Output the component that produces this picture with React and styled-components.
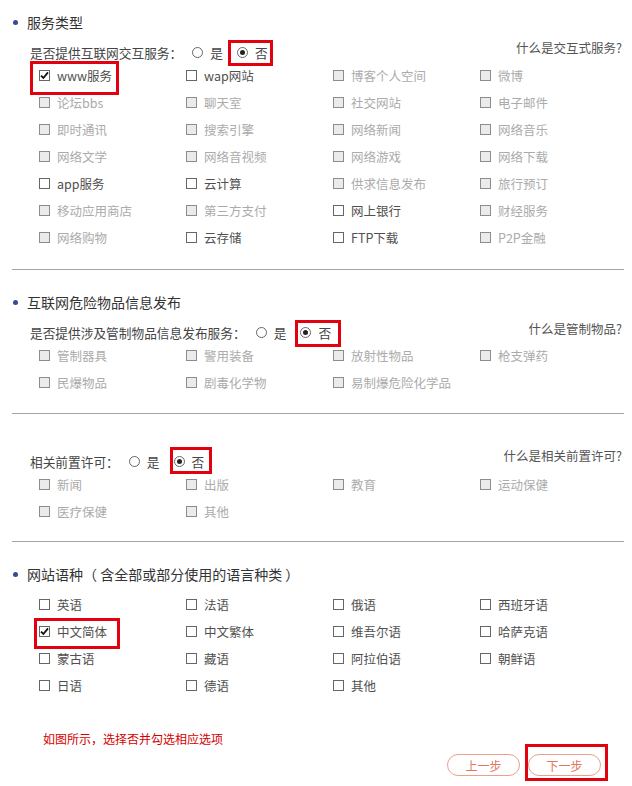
import React from "react";
import styled, { createGlobalStyle } from "styled-components";

const GlobalStyle = createGlobalStyle`
  body {
    margin: 0;
    background: #fff;
    font-family: "Noto Sans CJK SC", "Noto Sans", sans-serif;
  }
`;

const Page = styled.div`
  width: 632px;
  padding-bottom: 10px;
`;

const Section = styled.div`
  padding: ${(props) => props.$top}px 10px 0 13px;
`;

const Title = styled.div`
  display: flex;
  align-items: center;
  gap: 9px;
  height: 20px;
  font-size: 14px;
  color: #333;
  &::before {
    content: "";
    width: 5px;
    height: 5px;
    border-radius: 50%;
    background: #3b4896;
  }
`;

const Question = styled.div`
  display: flex;
  align-items: center;
  height: 20px;
  margin-top: ${(props) => props.$top || 0}px;
  padding-left: 17px;
  font-size: 12.7px;
  color: #444;
`;

const QuestionLabel = styled.span`
  margin-right: 10px;
`;

const Help = styled.span`
  margin-left: auto;
  margin-bottom: ${(props) => props.$lift * 2}px;
  font-size: 12.5px;
  color: #555;
  white-space: nowrap;
`;

const RadioOption = styled.label`
  display: flex;
  align-items: center;
  gap: 7px;
  margin-right: 14px;
`;

const RadioCircle = styled.span`
  box-sizing: border-box;
  display: flex;
  align-items: center;
  justify-content: center;
  width: 11px;
  height: 11px;
  border: 1px solid #666;
  border-radius: 50%;
  &::after {
    content: "";
    display: ${(props) => (props.$checked ? "block" : "none")};
    width: 5px;
    height: 5px;
    border-radius: 50%;
    background: #222;
  }
`;

const Highlight = styled.span`
  position: relative;
  display: inline-flex;
  justify-self: start;
  &::after {
    content: "";
    position: absolute;
    top: ${(props) => props.$t}px;
    right: ${(props) => props.$r}px;
    bottom: ${(props) => props.$b}px;
    left: ${(props) => props.$l}px;
    border: 3px solid #e3000f;
    pointer-events: none;
  }
`;

const Grid = styled.div`
  display: grid;
  grid-template-columns: repeat(4, 147px);
  grid-auto-rows: 27px;
  margin-top: ${(props) => props.$top || 0}px;
  padding-left: 26px;
`;

const Item = styled.label`
  display: flex;
  align-items: center;
  gap: 7px;
  font-size: 12.5px;
  color: ${(props) => (props.$disabled ? "#ababab" : "#505050")};
  white-space: nowrap;
`;

const Box = styled.span`
  box-sizing: border-box;
  display: flex;
  align-items: center;
  justify-content: center;
  width: 11px;
  height: 11px;
  border: 1px solid ${(props) => (props.$disabled ? "#8c8c8c" : "#666")};
  background: ${(props) => (props.$disabled ? "#ebebeb" : "#fff")};
  svg {
    display: block;
  }
`;

const Divider = styled.div`
  height: 1px;
  margin: ${(props) => props.$top}px 8px 0 12px;
  background: #a6a6a6;
`;

const Note = styled.div`
  margin: 31px 0 0 43px;
  font-size: 12px;
  line-height: 18px;
  color: #d40000;
`;

const Actions = styled.div`
  display: flex;
  justify-content: flex-end;
  gap: 8px;
  margin-top: 6px;
  padding-right: 31px;
`;

const StepButton = styled.button`
  box-sizing: border-box;
  width: 73px;
  height: 22px;
  padding: 0;
  border: 1px solid #e9a18d;
  border-radius: 11px;
  background: #fff;
  font-family: inherit;
  font-size: 12px;
  color: #e2775a;
`;

function Check({ label, checked, disabled }) {
  return (
    <Item $disabled={disabled}>
      <Box $disabled={disabled}>
        {checked && (
          <svg width="9" height="9" viewBox="0 0 9 9">
            <path d="M1 4.6 L3.4 7 L8 1.4" fill="none" stroke="#111" strokeWidth="1.8" />
          </svg>
        )}
      </Box>
      {label}
    </Item>
  );
}

function Radio({ label, checked }) {
  return (
    <RadioOption>
      <RadioCircle $checked={checked} />
      {label}
    </RadioOption>
  );
}

function Options({ items, top }) {
  return (
    <Grid $top={top}>
      {items.map((item, i) =>
        item.box ? (
          <Highlight key={i} {...item.box}>
            <Check label={item.label} checked={item.checked} disabled={item.disabled} />
          </Highlight>
        ) : (
          <Check key={i} label={item.label} checked={item.checked} disabled={item.disabled} />
        )
      )}
    </Grid>
  );
}

const on = (label, extra) => ({ label, ...extra });
const off = (label) => ({ label, disabled: true });

const services = [
  on("www服务", { checked: true, box: { $t: -1, $r: -7, $b: -6, $l: -9 } }),
  on("wap网站"), off("博客个人空间"), off("微博"),
  off("论坛bbs"), off("聊天室"), off("社交网站"), off("电子邮件"),
  off("即时通讯"), off("搜索引擎"), off("网络新闻"), off("网络音乐"),
  off("网络文学"), off("网络音视频"), off("网络游戏"), off("网络下载"),
  on("app服务"), on("云计算"), off("供求信息发布"), off("旅行预订"),
  off("移动应用商店"), off("第三方支付"), on("网上银行"), off("财经服务"),
  off("网络购物"), on("云存储"), on("FTP下载"), off("P2P金融"),
];

const goods = [
  off("管制器具"), off("警用装备"), off("放射性物品"), off("枪支弹药"),
  off("民爆物品"), off("剧毒化学物"), off("易制爆危险化学品"),
];

const permits = [
  off("新闻"), off("出版"), off("教育"), off("运动保健"),
  off("医疗保健"), off("其他"),
];

const languages = [
  on("英语"), on("法语"), on("俄语"), on("西班牙语"),
  on("中文简体", { checked: true, box: { $t: 0, $r: -13, $b: -4, $l: -5 } }),
  on("中文繁体"), on("维吾尔语"), on("哈萨克语"),
  on("蒙古语"), on("藏语"), on("阿拉伯语"), on("朝鲜语"),
  on("日语"), on("德语"), on("其他"),
];

export default function App() {
  return (
    <Page>
      <GlobalStyle />
      <Section $top={12}>
        <Title>服务类型</Title>
        <Question $top={10}>
          <QuestionLabel>是否提供互联网交互服务：</QuestionLabel>
          <Radio label="是" />
          <Highlight $t={-3} $r={9} $b={-4} $l={-9}>
            <Radio label="否" checked />
          </Highlight>
          <Help $lift={5}>什么是交互式服务?</Help>
        </Question>
        <Options items={services} />
      </Section>
      <Divider $top={18} />

      <Section $top={22}>
        <Title>互联网危险物品信息发布</Title>
        <Question $top={10}>
          <QuestionLabel>是否提供涉及管制物品信息发布服务：</QuestionLabel>
          <Radio label="是" />
          <Highlight $t={-3} $r={4} $b={-5} $l={-5}>
            <Radio label="否" checked />
          </Highlight>
          <Help $lift={4}>什么是管制物品?</Help>
        </Question>
        <Options items={goods} />
      </Section>
      <Divider $top={17} />

      <Section $top={37}>
        <Question>
          <QuestionLabel>相关前置许可：</QuestionLabel>
          <Radio label="是" />
          <Highlight $t={-5} $r={6} $b={-3} $l={-4}>
            <Radio label="否" checked />
          </Highlight>
          <Help $lift={6}>什么是相关前置许可?</Help>
        </Question>
        <Options items={permits} />
      </Section>
      <Divider $top={16} />

      <Section $top={22}>
        <Title>网站语种（ 含全部或部分使用的语言种类 ）</Title>
        <Options items={languages} top={7} />
      </Section>

      <Note>如图所示，选择否并勾选相应选项</Note>
      <Actions>
        <StepButton>上一步</StepButton>
        <Highlight $t={-10} $r={-7} $b={-5} $l={-3}>
          <StepButton>下一步</StepButton>
        </Highlight>
      </Actions>
    </Page>
  );
}
